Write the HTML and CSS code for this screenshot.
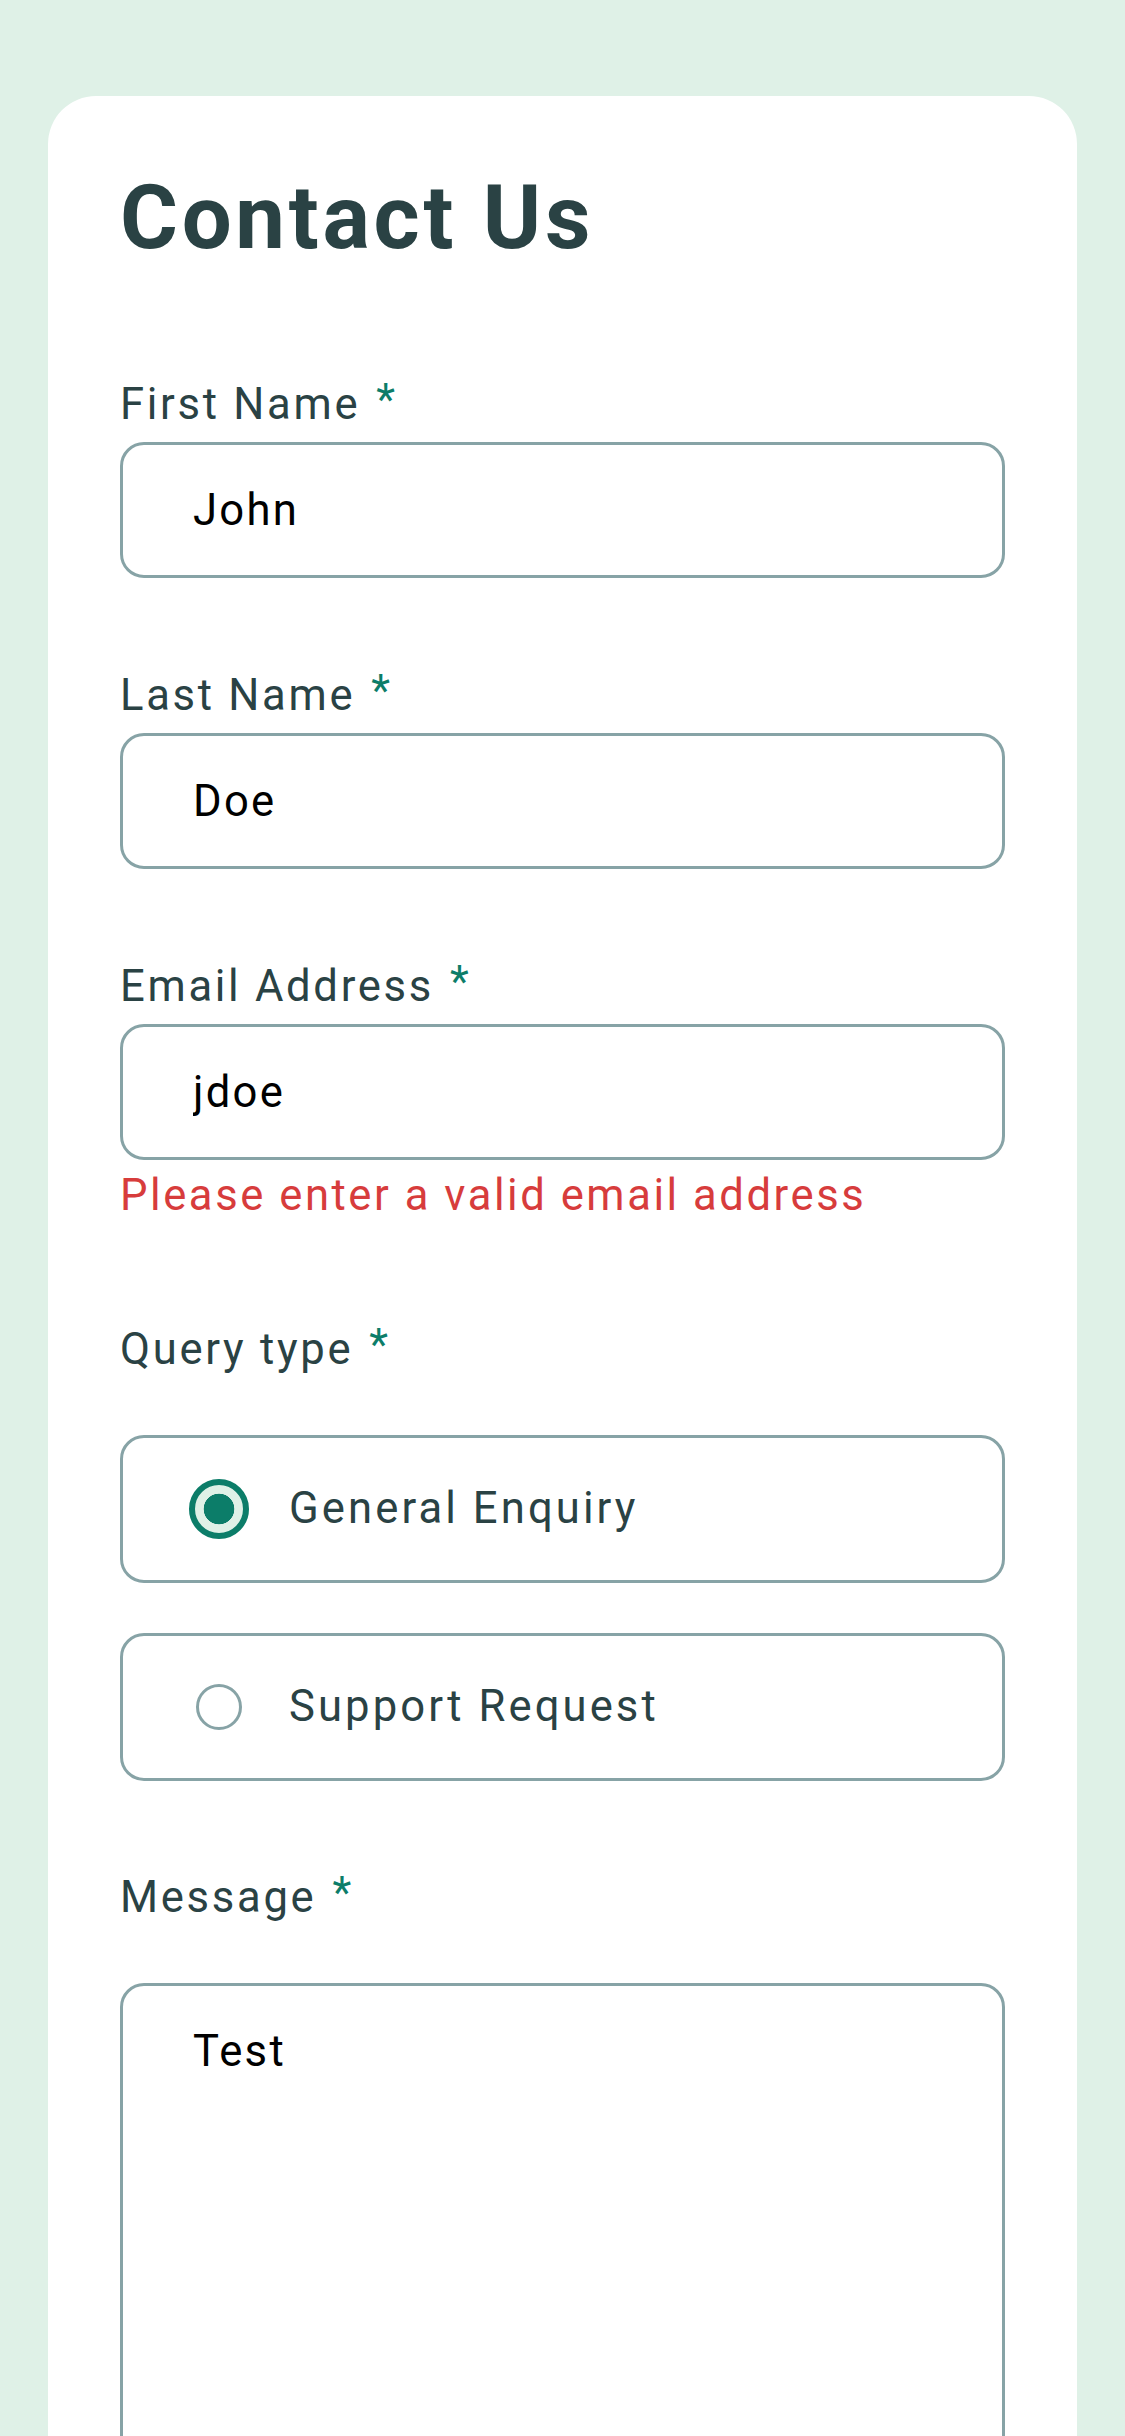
FILE: index.html
```html
<!DOCTYPE html>
<html lang="en">
<head>
<meta charset="utf-8">
<title>Contact Us</title>
<link rel="stylesheet" href="styles.css">
</head>
<body>
<main class="page">
  <form class="card">
    <h1 class="title">Contact Us</h1>

    <div class="field">
      <label class="label" for="first">First Name<span class="req">*</span></label>
      <input class="input" id="first" type="text" value="John">
    </div>

    <div class="field">
      <label class="label" for="last">Last Name<span class="req">*</span></label>
      <input class="input" id="last" type="text" value="Doe">
    </div>

    <div class="field field--error">
      <label class="label" for="email">Email Address<span class="req">*</span></label>
      <input class="input" id="email" type="text" value="jdoe">
      <p class="error">Please enter a valid email address</p>
    </div>

    <div class="group">
      <div class="label label--group">Query type<span class="req">*</span></div>
      <div class="options">
        <label class="option">
          <span class="radio-slot"><input class="radio" type="radio" name="query" checked></span>
          <span class="option-text">General Enquiry</span>
        </label>
        <label class="option">
          <span class="radio-slot"><input class="radio" type="radio" name="query"></span>
          <span class="option-text">Support Request</span>
        </label>
      </div>
    </div>

    <div class="group">
      <label class="label label--group" for="msg">Message<span class="req">*</span></label>
      <textarea class="textarea" id="msg">Test</textarea>
    </div>
  </form>
</main>
</body>
</html>
```

FILE: styles.css
```css
* {
  box-sizing: border-box;
}

html, body {
  margin: 0;
  padding: 0;
}

body {
  background: #dff1e7;
  font-family: Roboto, "Liberation Sans", sans-serif;
  color: #2a4244;
  min-height: 100vh;
}

.page {
  padding: 96px 48px 0;
}

.card {
  background: #ffffff;
  border-radius: 48px;
  padding: 72px 72px 120px;
}

.title {
  margin: 0 0 113px;
  font-size: 88.6px;
  line-height: 100px;
  font-weight: 700;
  letter-spacing: 3.7px;
  color: #2a4244;
}

.field {
  margin-bottom: 94px;
}

.field--error {
  margin-bottom: 106px;
}

.label {
  display: block;
  font-size: 43.6px;
  line-height: 48px;
  letter-spacing: 2.7px;
  color: #2a4244;
  margin-bottom: 13px;
}

.label--group {
  margin-bottom: 61px;
}

.req {
  color: #0c7d69;
  margin-left: 16px;
  vertical-align: 4px;
  line-height: 0;
}

.input {
  display: block;
  width: 100%;
  height: 136px;
  margin: 0;
  border: 3px solid #87a3a6;
  border-radius: 24px;
  padding: 0 70px;
  background: #fff;
  font-family: Roboto, "Liberation Sans", sans-serif;
  font-size: 43.6px;
  letter-spacing: 2.3px;
  color: #000;
  outline: none;
}

.error {
  margin: 12px 0 0;
  font-size: 43.6px;
  line-height: 48px;
  letter-spacing: 2.55px;
  color: #d73c3c;
}

.group {
  margin-bottom: 93px;
}

.options {
  display: flex;
  flex-direction: column;
  gap: 50px;
}

.option {
  display: flex;
  align-items: center;
  gap: 40px;
  height: 148px;
  border: 3px solid #87a3a6;
  border-radius: 24px;
  padding-left: 66px;
}

.radio-slot {
  display: flex;
  align-items: center;
  justify-content: center;
  width: 60px;
  height: 60px;
  flex: none;
}

.radio {
  appearance: none;
  -webkit-appearance: none;
  margin: 0;
  width: 46px;
  height: 46px;
  border: 3px solid #87a3a6;
  border-radius: 50%;
  background: #fff;
}

.radio:checked {
  width: 60px;
  height: 60px;
  border: 6px solid #0c7d69;
  background: radial-gradient(circle, #0c7d69 0 15px, #dff1e7 15.6px);
}

.option-text {
  font-size: 43.6px;
  line-height: 48px;
  letter-spacing: 3.1px;
  color: #2a4244;
}

.textarea {
  display: block;
  width: 100%;
  height: 720px;
  margin: 0;
  border: 3px solid #87a3a6;
  border-radius: 24px;
  padding: 42px 70px;
  resize: none;
  background: #fff;
  font-family: Roboto, "Liberation Sans", sans-serif;
  font-size: 43.6px;
  line-height: 48px;
  letter-spacing: 2.3px;
  color: #000;
  outline: none;
}
```
